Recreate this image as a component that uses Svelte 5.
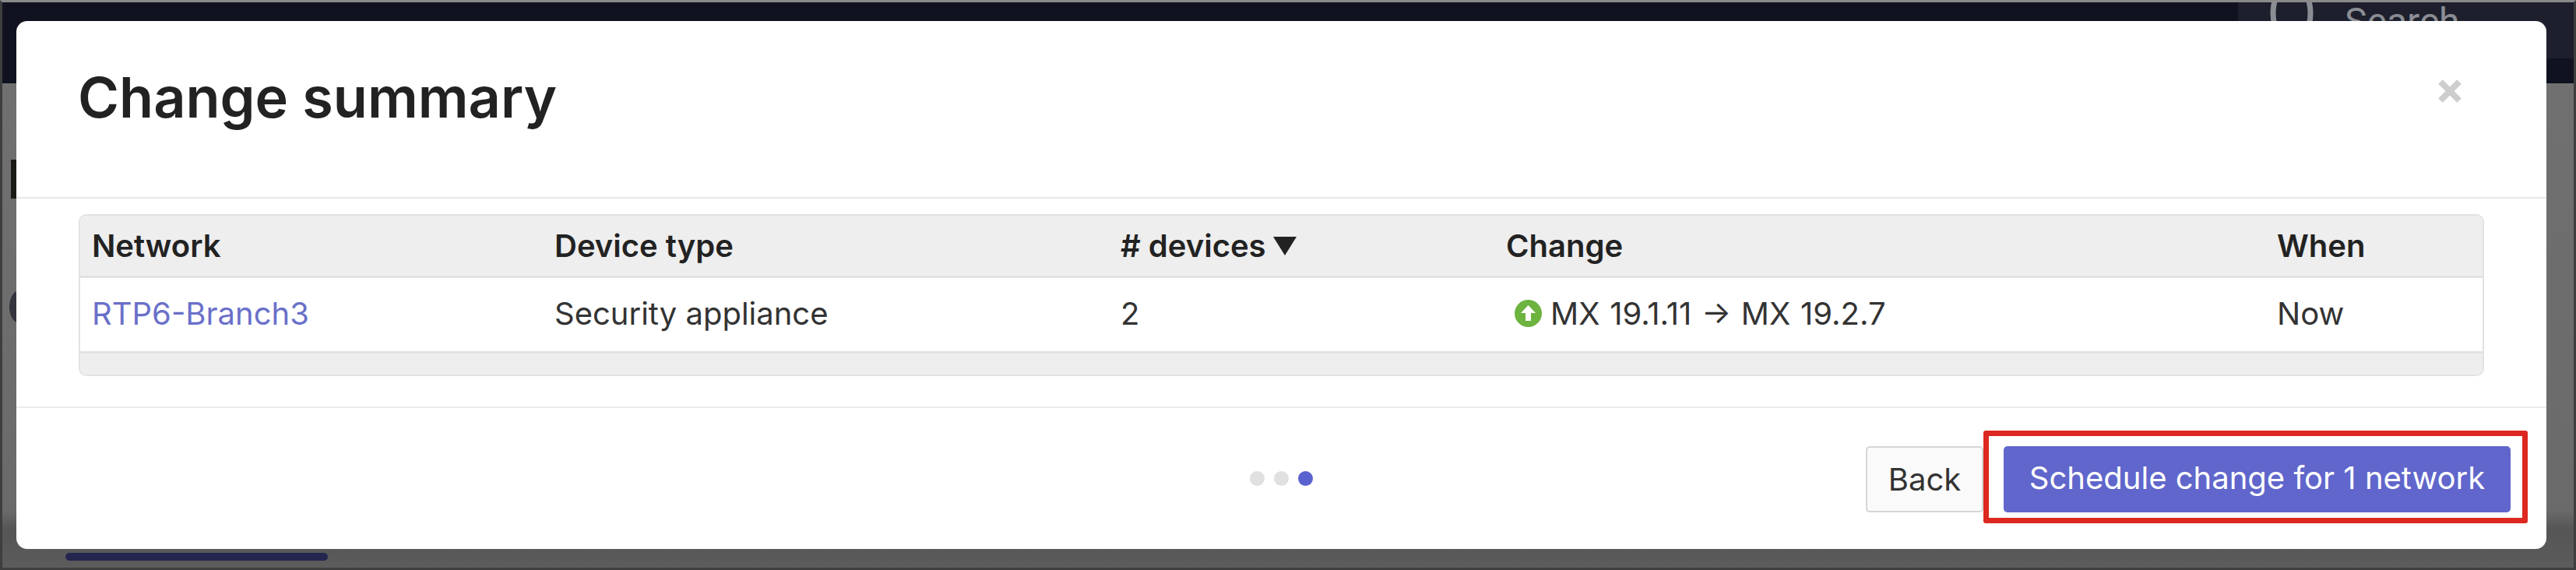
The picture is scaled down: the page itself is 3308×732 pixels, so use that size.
<script lang="ts">
  const columns = [
    { label: "Network", width: 594 },
    { label: "Device type", width: 727 },
    { label: "# devices", width: 495, sorted: true },
    { label: "Change", width: 990 },
    { label: "When", width: 0 },
  ];
  const dots = [false, false, true];
</script>

<div class="page">
  <div class="backdrop-head">
    <div class="search">
      <svg class="lens" viewBox="0 0 56 80" width="56" height="80">
        <ellipse cx="28" cy="40" rx="24" ry="38" fill="none" stroke="#8b8d94" stroke-width="7" />
      </svg>
      <span class="search-label">Search</span>
    </div>
  </div>
  <div class="backdrop-body">
    <span class="stub stub-title"></span>
    <span class="stub stub-round"></span>
    <span class="scroll-thumb"></span>
  </div>

  <div class="modal">
    <header class="modal-head">
      <h1>Change summary</h1>
      <button class="close" aria-label="Close">
        <svg viewBox="0 0 32 32" width="32" height="32">
          <path d="M4 4 L28 28 M28 4 L4 28" stroke="#cdcdcd" stroke-width="8" fill="none" />
        </svg>
      </button>
    </header>

    <div class="modal-body">
      <div class="table">
        <div class="row head">
          {#each columns as col}
            <div class="cell" style="flex-basis: {col.width}px">
              {col.label}
              {#if col.sorted}
                <svg class="caret" viewBox="0 0 30 24" width="30" height="24">
                  <path d="M0 0 H30 L15 24 Z" fill="#222" />
                </svg>
              {/if}
            </div>
          {/each}
        </div>
        <div class="row data">
          <div class="cell" style="flex-basis: 594px"><a href="#top">RTP6-Branch3</a></div>
          <div class="cell" style="flex-basis: 727px">Security appliance</div>
          <div class="cell" style="flex-basis: 495px">2</div>
          <div class="cell change" style="flex-basis: 990px">
            <svg class="up" viewBox="0 0 35 35" width="35" height="35">
              <circle cx="17.5" cy="17.5" r="17.5" fill="#6cb33f" />
              <path d="M17.5 7 L27 17 H21 V27 H14 V17 H8 Z" fill="#fff" />
            </svg>
            MX 19.1.11 → MX 19.2.7
          </div>
          <div class="cell">Now</div>
        </div>
        <div class="table-foot"></div>
      </div>
    </div>

    <footer class="modal-foot">
      <div></div>
      <div class="dots">
        {#each dots as on}
          <span class="dot" class:on></span>
        {/each}
      </div>
      <div class="actions">
        <button class="btn back">Back</button>
        <div class="highlight">
          <button class="btn primary">Schedule change for 1 network</button>
        </div>
      </div>
    </footer>
  </div>
</div>

<style>
  :global(body) {
    margin: 0;
    background: #6e6e6e;
  }

  .page {
    position: relative;
    width: 3308px;
    height: 732px;
    box-sizing: border-box;
    overflow: hidden;
    border: 3px solid #3e3e3e;
    border-top-color: #8a8a8a;
    font-family: Inter, "Liberation Sans", sans-serif;
    color: #222;
  }

  .backdrop-head {
    height: 104px;
    background: #10131f;
    display: flex;
    justify-content: flex-end;
  }

  .search {
    width: 431px;
    height: 72px;
    background: #1d202c;
    box-sizing: border-box;
    padding-left: 41px;
    display: flex;
    align-items: flex-start;
    gap: 40px;
    font-family: Roboto, sans-serif;
    font-size: 48px;
    line-height: 50px;
    color: #8b8d94;
    overflow: hidden;
  }

  .lens {
    margin-top: -26px;
  }

  .backdrop-body {
    position: relative;
    height: 623px;
    background: linear-gradient(#707070, #6a6a6a 88%, #555 92%, #5c5c5c);
  }

  .stub {
    position: absolute;
    background: #1c1a16;
  }

  .stub-title {
    left: 11px;
    top: 98px;
    width: 10px;
    height: 50px;
  }

  .stub-round {
    left: 9px;
    top: 266px;
    width: 26px;
    height: 42px;
    border-radius: 50%;
    background: #33343e;
  }

  .scroll-thumb {
    position: absolute;
    left: 81px;
    bottom: 10px;
    width: 337px;
    height: 10px;
    border-radius: 5px;
    background: #24264f;
  }

  .modal {
    position: absolute;
    left: 18px;
    top: 24px;
    width: 3249px;
    height: 678px;
    display: flex;
    flex-direction: column;
    background: #fff;
    border-radius: 14px;
  }

  .modal-head {
    height: 228px;
    box-sizing: border-box;
    padding: 0 108px 0 79px;
    display: flex;
    justify-content: space-between;
    align-items: flex-start;
    border-bottom: 2px solid #e8e8e8;
  }

  h1 {
    margin: 53px 0 0;
    font-size: 72px;
    line-height: 90px;
    font-weight: 600;
    color: #222;
  }

  .close {
    margin-top: 74px;
    padding: 0;
    border: 0;
    background: none;
    display: flex;
  }

  .modal-body {
    height: 269px;
    box-sizing: border-box;
    padding: 20px 80px 0 80px;
    border-bottom: 2px solid #ececec;
  }

  .table {
    border: 2px solid #e2e2e2;
    border-radius: 10px;
    overflow: hidden;
    font-size: 40px;
  }

  .row {
    display: flex;
    align-items: center;
    padding-left: 15px;
    box-sizing: border-box;
  }

  .row.head {
    height: 80px;
    background: #eeeeee;
    border-bottom: 3px solid #e2e2e2;
    font-weight: 600;
  }

  .row.data {
    height: 97px;
    padding-bottom: 3px;
    border-bottom: 3px solid #e2e2e2;
    color: #333;
  }

  .cell {
    flex: 0 0 auto;
    display: flex;
    align-items: center;
    gap: 9px;
    white-space: nowrap;
  }

  .cell a {
    color: #6a70c9;
    text-decoration: none;
  }

  .change {
    gap: 11px;
    word-spacing: 1.5px;
  }

  .up {
    margin-left: 11px;
  }

  .table-foot {
    height: 27px;
    background: #eeeeee;
  }

  .modal-foot {
    flex: 1;
    display: grid;
    grid-template-columns: 1fr auto 1fr;
    align-items: center;
  }

  .dots {
    display: flex;
    gap: 12px;
  }

  .dot {
    width: 19px;
    height: 19px;
    border-radius: 50%;
    background: #e0e0e0;
  }

  .dot.on {
    background: #5a62cf;
  }

  .actions {
    align-self: start;
    display: flex;
    align-items: flex-start;
    justify-content: flex-end;
    padding: 29px 24px 0 0;
  }

  .btn {
    font-family: inherit;
    font-size: 40px;
    height: 85px;
    box-sizing: border-box;
    border-radius: 5px;
    cursor: pointer;
  }

  .back {
    width: 151px;
    margin-top: 20px;
    background: #fafafa;
    border: 2px solid #d5d5d5;
    color: #333;
    padding: 0;
  }

  .highlight {
    box-sizing: border-box;
    width: 699px;
    height: 119px;
    padding: 13px 15px 0 19px;
    border: 7px solid #dc2820;
    border-radius: 3px;
    background: #fff;
  }

  .primary {
    width: 651px;
    border: 0;
    background: #6066cb;
    color: #fff;
    padding: 0 0 4px;
  }
</style>
